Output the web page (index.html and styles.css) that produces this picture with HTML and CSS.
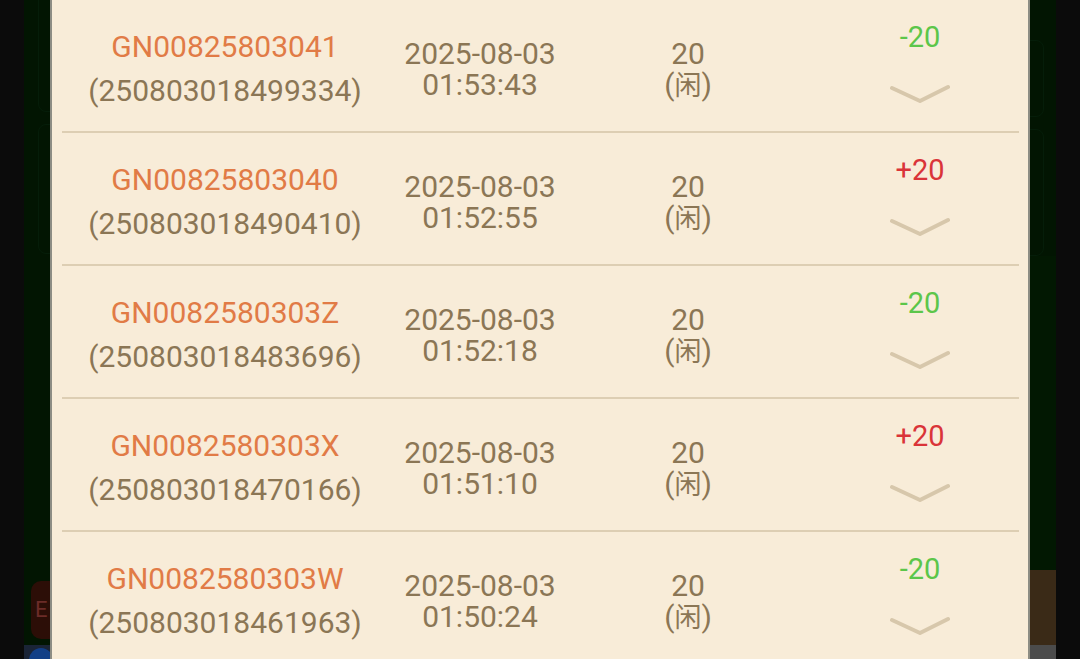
FILE: index.html
```html
<!DOCTYPE html>
<html lang="zh-CN">
<head>
<meta charset="utf-8">
<title>记录</title>
<link rel="stylesheet" href="styles.css">
</head>
<body>
<div class="edge"></div>
<div class="side side-left">
  <div class="ghost ghost-a"></div>
  <div class="ghost ghost-b"></div>
  <div class="fill"></div>
  <div class="badge"><span>E</span></div>
  <div class="foot foot-left"><span class="dot"></span></div>
</div>
<main class="panel">
  <div class="list">
    <div class="row">
      <div class="c-id"><div class="gn">GN00825803041</div><div class="sub">(250803018499334)</div></div>
      <div class="c-time"><div>2025-08-03</div><div>01:53:43</div></div>
      <div class="c-bet"><div>20</div><div>(<span class="cjk">闲</span>)</div></div>
      <div class="c-win"><div class="amt lose">-20</div><svg class="chev" width="60" height="20" viewBox="0 0 60 20"><polyline points="2,4 30,17 58,3"/></svg></div>
    </div>
    <div class="row">
      <div class="c-id"><div class="gn">GN00825803040</div><div class="sub">(250803018490410)</div></div>
      <div class="c-time"><div>2025-08-03</div><div>01:52:55</div></div>
      <div class="c-bet"><div>20</div><div>(<span class="cjk">闲</span>)</div></div>
      <div class="c-win"><div class="amt win">+20</div><svg class="chev" width="60" height="20" viewBox="0 0 60 20"><polyline points="2,4 30,17 58,3"/></svg></div>
    </div>
    <div class="row">
      <div class="c-id"><div class="gn">GN0082580303Z</div><div class="sub">(250803018483696)</div></div>
      <div class="c-time"><div>2025-08-03</div><div>01:52:18</div></div>
      <div class="c-bet"><div>20</div><div>(<span class="cjk">闲</span>)</div></div>
      <div class="c-win"><div class="amt lose">-20</div><svg class="chev" width="60" height="20" viewBox="0 0 60 20"><polyline points="2,4 30,17 58,3"/></svg></div>
    </div>
    <div class="row">
      <div class="c-id"><div class="gn">GN0082580303X</div><div class="sub">(250803018470166)</div></div>
      <div class="c-time"><div>2025-08-03</div><div>01:51:10</div></div>
      <div class="c-bet"><div>20</div><div>(<span class="cjk">闲</span>)</div></div>
      <div class="c-win"><div class="amt win">+20</div><svg class="chev" width="60" height="20" viewBox="0 0 60 20"><polyline points="2,4 30,17 58,3"/></svg></div>
    </div>
    <div class="row">
      <div class="c-id"><div class="gn">GN0082580303W</div><div class="sub">(250803018461963)</div></div>
      <div class="c-time"><div>2025-08-03</div><div>01:50:24</div></div>
      <div class="c-bet"><div>20</div><div>(<span class="cjk">闲</span>)</div></div>
      <div class="c-win"><div class="amt lose">-20</div><svg class="chev" width="60" height="20" viewBox="0 0 60 20"><polyline points="2,4 30,17 58,3"/></svg></div>
    </div>
  </div>
</main>
<div class="side side-right">
  <div class="ghost ghost-c"></div>
  <div class="ghost ghost-d"></div>
  <div class="fill"></div>
  <div class="brown"></div>
  <div class="foot foot-right"></div>
</div>
<div class="edge"></div>
</body>
</html>
```

FILE: styles.css
```css
html, body {
  margin: 0;
  padding: 0;
}
body {
  width: 1080px;
  height: 659px;
  overflow: hidden;
  display: flex;
  background: #0b0b0b;
  font-family: Roboto, "Noto Sans CJK SC", sans-serif;
}
.edge {
  width: 24px;
  flex: none;
  background: #0b0b0b;
}
.side {
  width: 26px;
  flex: none;
  background: #021502;
  display: flex;
  flex-direction: column;
  overflow: hidden;
}
.ghost {
  flex: none;
  border: 1px solid #051d09;
  border-radius: 8px;
  height: 110px;
}
.side-left .ghost { margin-left: 14px; margin-right: -10px; }
.side-right .ghost { margin-left: -10px; margin-right: 12px; }
.ghost-a { margin-top: -8px; height: 118px; }
.ghost-b { margin-top: 12px; height: 128px; }
.ghost-c { margin-top: 40px; height: 75px; }
.ghost-d { margin-top: 12px; height: 125px; }
.fill { flex: 1; }
.badge {
  flex: none;
  height: 58px;
  margin: 0 -10px 6px 7px;
  border-radius: 10px;
  background: #2c0e07;
  color: #6b2c28;
  font-size: 22px;
  line-height: 58px;
  padding-left: 4px;
}
.foot {
  flex: none;
  height: 14px;
}
.foot-left {
  background: #1a2436;
  position: relative;
}
.foot-left .dot {
  position: absolute;
  left: 5px;
  top: 3px;
  width: 24px;
  height: 24px;
  border-radius: 50%;
  background: #123f86;
}
.brown {
  flex: none;
  height: 75px;
  background: #3a2a17;
}
.foot-right {
  background: #4b4b4b;
}
.side-right .fill { background: #021802; }

.panel {
  width: 976px;
  flex: none;
  background: #f8ecd8;
  border-left: 2px solid #8d8d84;
  border-right: 2px solid #8d8d84;
  overflow: hidden;
}
.list {
  margin: -2px 9px 0 10px;
}
.row {
  box-sizing: border-box;
  height: 133px;
  border-top: 2px solid #ddceb3;
  padding-top: 6px;
  display: grid;
  grid-template-columns: 326px 184px 232px 215px;
  align-items: center;
  text-align: center;
  font-size: 30px;
  color: #8b7655;
  white-space: nowrap;
}
.c-id {
  line-height: 44px;
}
.gn {
  color: #e17b46;
}
.c-time, .c-bet {
  line-height: 31px;
}
.cjk {
  font-family: "Noto Sans CJK SC", sans-serif;
  font-size: 27px;
  line-height: 1;
}
.c-win {
  align-self: start;
  padding-left: 17px;
  padding-top: 16px;
  display: flex;
  flex-direction: column;
  align-items: center;
}
.amt {
  line-height: 31px;
  font-size: 29px;
}
.amt.lose { color: #5cc64a; }
.amt.win { color: #da3439; }
.chev {
  margin-top: 31px;
  display: block;
}
.chev polyline {
  fill: none;
  stroke: #d7c7ab;
  stroke-width: 4;
  stroke-linecap: round;
  stroke-linejoin: round;
}
```
